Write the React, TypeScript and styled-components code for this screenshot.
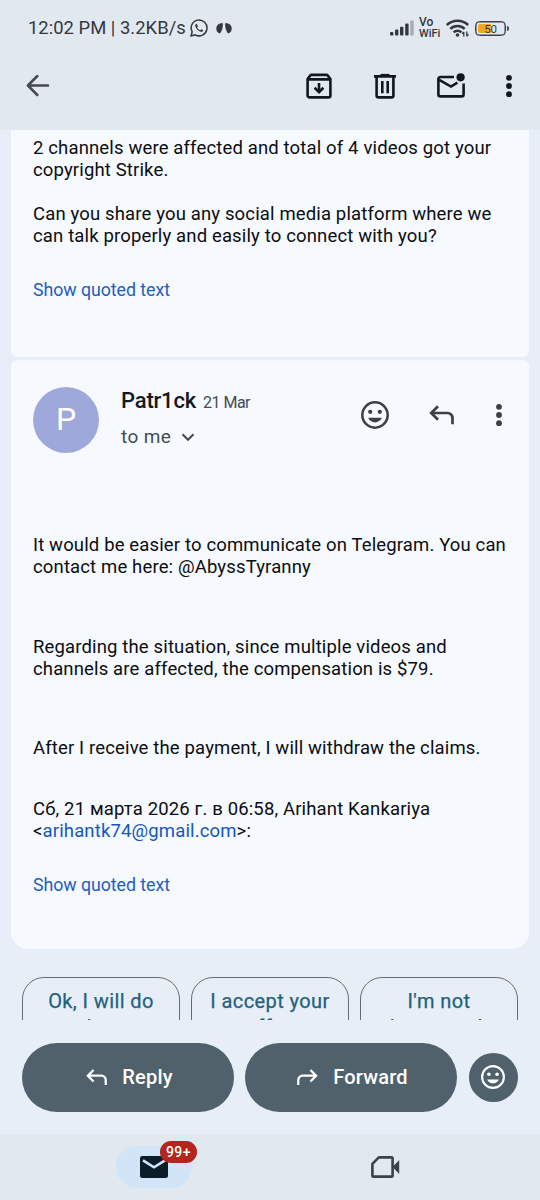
import React from "react";
import styled, { createGlobalStyle } from "styled-components";

const GlobalStyle = createGlobalStyle`
  * { box-sizing: border-box; }
  body { margin: 0; background: #e7eef7; font-family: Roboto, "Noto Sans", sans-serif; }
  button { border: 0; padding: 0; background: none; font: inherit; color: inherit; }
`;

const Screen = styled.div`
  width: 540px;
  height: 1200px;
  display: flex;
  flex-direction: column;
  overflow: hidden;
  background: #e7eef7;
`;

const Header = styled.header`
  flex: none;
  height: 130px;
  background: #e2e8f0;
  color: #111820;
`;

const StatusBar = styled.div`
  height: 56px;
  padding: 0 31px 0 28px;
  display: flex;
  align-items: center;
  color: #33383f;
`;

const Clock = styled.span`
  width: 158px;
  font-size: 18.4px;
  line-height: 22px;
  letter-spacing: 0.03px;
  white-space: nowrap;
`;

const StatusIcons = styled.div<{ $gap: number; $push?: boolean }>`
  display: flex;
  align-items: center;
  gap: ${(p) => p.$gap}px;
  margin-left: ${(p) => (p.$push ? "auto" : "3.5px")};
`;

const VoWifi = styled.div`
  width: 22px;
  font-weight: 500;
  white-space: nowrap;
`;

const VoLine = styled.span<{ $size: number }>`
  display: block;
  line-height: 11px;
  font-size: ${(p) => p.$size}px;
`;

const Toolbar = styled.div`
  height: 60px;
  padding: 0 6px 0 22px;
  display: flex;
  align-items: center;
`;

const IconButton = styled.button<{ $w: number; $push?: boolean }>`
  width: ${(p) => p.$w}px;
  height: 36px;
  flex: none;
  display: flex;
  align-items: center;
  justify-content: center;
  margin-left: ${(p) => (p.$push ? "auto" : "0")};
`;

const Thread = styled.main`
  flex: 1;
  min-height: 0;
  padding: 0 11px;
  display: flex;
  flex-direction: column;
  gap: 3px;
`;

const Card = styled.article<{ $h: number; $radius: string; $top: number }>`
  flex: none;
  height: ${(p) => p.$h}px;
  padding: ${(p) => p.$top}px 22px 0;
  border-radius: ${(p) => p.$radius};
  background: #f6f9fe;
`;

const Paragraph = styled.p<{ $gap?: number }>`
  margin: ${(p) => p.$gap ?? 0}px 0 0;
  font-size: 18.5px;
  line-height: 22px;
  letter-spacing: 0.145px;
  color: #0b0d10;
  white-space: nowrap;
`;

const Line = styled.span`
  display: block;
`;

const Link = styled.a`
  color: #1558bd;
`;

const QuotedLink = styled.a<{ $gap: number }>`
  display: block;
  margin-top: ${(p) => p.$gap}px;
  font-size: 17.8px;
  line-height: 22px;
  letter-spacing: -0.06px;
  color: #1f5fbd;
`;

const MessageHeader = styled.div`
  height: 66px;
  display: flex;
`;

const Avatar = styled.div`
  flex: none;
  width: 66px;
  height: 66px;
  border-radius: 50%;
  background: #9fa8da;
  color: #fff;
  font-size: 32px;
  line-height: 65px;
  text-align: center;
`;

const Sender = styled.div`
  flex: none;
  margin-left: 22px;
  width: 220px;
`;

const NameRow = styled.div`
  display: flex;
  align-items: baseline;
  gap: 7px;
  line-height: 28px;
  white-space: nowrap;
`;

const Name = styled.span`
  font-size: 22px;
  font-weight: 500;
  letter-spacing: -0.2px;
  color: #14181d;
`;

const DateText = styled.span`
  font-size: 16px;
  letter-spacing: -0.5px;
  color: #464b51;
`;

const Recipient = styled.div`
  display: flex;
  align-items: center;
  gap: 10px;
  margin-top: 7px;
  font-size: 19px;
  line-height: 26px;
  letter-spacing: 0.4px;
  color: #464b51;
`;

const Actions = styled.div`
  flex: none;
  display: flex;
  align-items: center;
  height: 55px;
  color: #3c4043;
`;

const Suggestions = styled.div`
  flex: none;
  height: 43px;
  margin: 0 22px;
  display: flex;
  gap: 11px;
  overflow: hidden;
`;

const Chip = styled.button`
  flex: 1;
  height: 80px;
  padding-top: 10px;
  border: 1px solid #656c73;
  border-radius: 22px;
  font-size: 20px;
  line-height: 26px;
  color: #22627f;
  display: flex;
  flex-direction: column;
  align-items: center;
  justify-content: flex-start;
`;

const ChipLine = styled.span`
  white-space: nowrap;
  letter-spacing: 0.4px;
  -webkit-text-stroke: 0.25px currentColor;
`;

const ReplyBar = styled.div`
  flex: none;
  height: 114px;
  padding: 23px 22px 0;
  display: flex;
  align-items: flex-start;
  gap: 11px;
`;

const Pill = styled.button`
  flex: none;
  width: 212px;
  height: 69px;
  border-radius: 35px;
  background: #50616c;
  color: #fff;
  display: flex;
  align-items: center;
  justify-content: center;
  gap: 15px;
  padding: 0 0 1px 3px;
  font-size: 20px;
  font-weight: 500;
  letter-spacing: 0.2px;
`;

const RoundButton = styled.button`
  flex: none;
  width: 49.5px;
  height: 49.5px;
  margin: 9.5px 0 0 auto;
  border-radius: 50%;
  background: #50616c;
  color: #fff;
  display: flex;
  align-items: center;
  justify-content: center;
`;

const BottomNav = styled.nav`
  flex: none;
  height: 66px;
  padding-top: 11.5px;
  background: #e2e8f0;
  display: flex;
`;

const NavItem = styled.div<{ $w: number }>`
  width: ${(p) => p.$w}px;
  height: 42px;
  display: flex;
  align-items: center;
  justify-content: center;
  color: #3b4148;
`;

const ActiveTab = styled.div`
  position: relative;
  width: 76px;
  height: 42px;
  border-radius: 21px;
  background: #d1e5f7;
  display: flex;
  align-items: center;
  justify-content: center;
`;

const Badge = styled.span`
  position: absolute;
  left: 44px;
  top: -4.5px;
  width: 37px;
  height: 22px;
  border-radius: 11px;
  background: #b3261e;
  color: #fff;
  text-align: center;
  font-size: 14px;
  font-weight: 500;
  line-height: 23px;
  letter-spacing: 0.5px;
`;

const Dots = () => (
  <svg width="8" height="24" viewBox="0 0 8 24" fill="currentColor">
    <circle cx="4" cy="3.8" r="2.9" />
    <circle cx="4" cy="12" r="2.9" />
    <circle cx="4" cy="20.2" r="2.9" />
  </svg>
);

const Smile = ({ size }: { size: number }) => (
  <svg width={size} height={size} viewBox="0 0 28 28" fill="currentColor">
    <circle cx="14" cy="14" r="12.7" fill="none" stroke="currentColor" strokeWidth="2.5" />
    <circle cx="9.2" cy="10.8" r="2.1" />
    <circle cx="18.8" cy="10.8" r="2.1" />
    <path d="M7.2 16.8h13.6c-1.1 2.8-3.7 4.6-6.8 4.6s-5.7-1.8-6.8-4.6z" />
  </svg>
);

const ReplyArrow = ({ width, flip }: { width: number; flip?: boolean }) => (
  <svg width={width} height={(width * 20) / 25} viewBox="0 0 25 20" fill="none" stroke="currentColor" strokeWidth="2.7">
    <g transform={flip ? "translate(25 0) scale(-1 1)" : undefined}>
      <path d="M9 1.2 2.2 8 9 14.8M2.2 8h16.3a5 5 0 0 1 5 5v6.2" />
    </g>
  </svg>
);

const WhatsApp = () => (
  <svg width="18" height="18" viewBox="0 0 18 18" fill="none" stroke="currentColor" strokeWidth="1.5">
    <path d="M1 17l1.2-4.2A7.9 7.9 0 1 1 5.2 15.8z" strokeLinejoin="round" />
    <path
      d="M6.6 4.7c-.9.2-1.7 1.2-1.3 2.6.7 2.6 3 4.9 5.5 5.5 1.4.3 2.4-.5 2.5-1.5l-2-1.1-1.1 1.1c-1.4-.5-2.5-1.6-3.1-3.1l.9-1z"
      fill="currentColor"
      stroke="none"
    />
  </svg>
);

const Leaves = () => (
  <svg width="16" height="11" viewBox="0 0 16 11" fill="currentColor">
    <path d="M6.9.3C3.2.1.3 2 .3 5.600c0 2.500 1.200 4.400 3.700 5C5.900 8.300 6.900 4.700 6.900.3z" />
    <path d="M9.100.3c3.700-.2 6.600 1.700 6.600 5.300 0 2.500-1.200 4.400-3.700 5C10.100 8.300 9.100 4.700 9.100.3z" />
  </svg>
);

const Signal = () => (
  <svg width="24" height="16" viewBox="0 0 24 16" fill="currentColor">
    <rect x="0" y="12" width="3.4" height="3.5" rx="1" />
    <rect x="5" y="9.5" width="3.4" height="6" rx="1" />
    <rect x="10" y="6.8" width="3.4" height="8.7" rx="1" />
    <rect x="15.2" y="3.5" width="3.4" height="12" rx="1" />
    <rect x="20.3" y="0.5" width="3.4" height="15" rx="1" fill="#a6abb3" />
  </svg>
);

const Wifi = () => (
  <svg width="24" height="18" viewBox="0 0 24 18" fill="none" stroke="currentColor" strokeWidth="2.5">
    <path d="M.8 6a15.6 15.6 0 0 1 21.4 0M4.3 9.8a10.5 10.5 0 0 1 14.4 0M7.6 13.4a5.7 5.7 0 0 1 7.8 0" />
    <circle cx="11.5" cy="16" r="1.8" fill="currentColor" stroke="none" />
    <path d="M17.8 17.5v-4.5m-1.6 1.8 1.6-1.8M20.8 12.5v4.8m1.7-2-1.7 2" strokeWidth="1.3" />
  </svg>
);

const BatteryShell = styled.div`
  position: relative;
  width: 31px;
  height: 15px;
  margin-right: 3px;
  border: 1px solid #3d424a;
  box-shadow: inset 0 0 0 0.5px #3d424a;
  border-radius: 4.5px;
  padding: 2px;
  &::after {
    content: "";
    position: absolute;
    right: -4px;
    top: 4px;
    width: 2px;
    height: 5px;
    border-radius: 0 2px 2px 0;
    background: #4a4f57;
  }
`;

const BatteryLevel = styled.div`
  width: 13px;
  height: 100%;
  border-radius: 2px 0 0 2px;
  background: #f5a623;
`;

const BatteryText = styled.span`
  position: absolute;
  inset: 0;
  text-align: center;
  font-size: 11.5px;
  line-height: 14px;
  letter-spacing: -0.2px;
`;

const BackIcon = () => (
  <svg width="24" height="22" viewBox="0 0 24 22" fill="none" stroke="#454a51" strokeWidth="2.5" strokeLinecap="round">
    <path d="M22 10.5H2.2M11.3 1 1.9 10.5l9.4 9.5" strokeLinejoin="round" />
  </svg>
);

const ArchiveIcon = () => (
  <svg width="26" height="26" viewBox="0 0 26 26" fill="none" stroke="currentColor" strokeWidth="2.6" strokeLinejoin="round">
    <path d="M1.6 6v16.4a2 2 0 0 0 2 2h18.8a2 2 0 0 0 2-2V6l-2.6-3.4a2 2 0 0 0-1.4-.7H5.6a2 2 0 0 0-1.4.7zM1.6 6.4h22.8" />
    <path d="M13 10v9M8.6 14.8 13 19.1l4.4-4.3" strokeLinejoin="miter" />
  </svg>
);

const TrashIcon = () => (
  <svg width="24" height="26" viewBox="0 0 24 26" fill="none" stroke="currentColor" strokeWidth="2.6">
    <path d="M1 3.4h22M3.6 3.4v19a2 2 0 0 0 2 2h12.8a2 2 0 0 0 2-2v-19M9.3 8v12.2M14.7 8v12.2" />
    <path d="M7.5 2.2h9" />
  </svg>
);

const UnreadIcon = () => (
  <svg width="30" height="27" viewBox="0 0 30 27" fill="none" stroke="currentColor" strokeWidth="2.6">
    <path d="M18 4H4.4a2 2 0 0 0-2 2v15.4a2 2 0 0 0 2 2h21.2a2 2 0 0 0 2-2V10.5" />
    <path d="M3.2 6.8 15 13.6l6.4-3.9" />
    <circle cx="24.6" cy="4.3" r="4.1" fill="currentColor" stroke="none" />
  </svg>
);

const MailIcon = () => (
  <svg width="28" height="22" viewBox="0 0 28 22">
    <rect width="28" height="22" rx="2.2" fill="#0c1d29" />
    <path d="M3 4.3 14 11.3l11-7" fill="none" stroke="#d1e5f7" strokeWidth="2.6" />
  </svg>
);

const MeetIcon = () => (
  <svg width="29" height="22" viewBox="0 0 29 22" fill="none" stroke="currentColor" strokeWidth="2.6" strokeLinejoin="round">
    <path d="M7.8 1.4h12.6a1.2 1.2 0 0 1 1.2 1.2v16.8a1.2 1.2 0 0 1-1.2 1.2H2.6a1.2 1.2 0 0 1-1.2-1.2V7.8z" />
    <path d="M21.6 11 28.2 4v14z" fill="currentColor" stroke="none" />
  </svg>
);

const ChevronDown = () => (
  <svg width="14" height="9" viewBox="0 0 14 9" fill="none" stroke="currentColor" strokeWidth="2">
    <path d="m1.5 1.3 5.5 5.5 5.5-5.5" />
  </svg>
);

const suggestions = [
  ["Ok, I will do", "that."],
  ["I accept your", "offer."],
  ["I'm not", "interested."],
];

export default function App() {
  return (
    <>
      <GlobalStyle />
      <Screen>
        <Header>
          <StatusBar>
            <Clock>12:02 PM | 3.2KB/s</Clock>
            <StatusIcons $gap={8}>
              <WhatsApp />
              <Leaves />
            </StatusIcons>
            <StatusIcons $gap={5} $push>
              <Signal />
              <VoWifi>
                <VoLine $size={12}>Vo</VoLine>
                <VoLine $size={11}>WiFi</VoLine>
              </VoWifi>
              <Wifi />
              <BatteryShell>
                <BatteryLevel />
                <BatteryText>50</BatteryText>
              </BatteryShell>
            </StatusIcons>
          </StatusBar>
          <Toolbar>
            <IconButton $w={32} aria-label="Back"><BackIcon /></IconButton>
            <IconButton $w={66} $push aria-label="Archive"><ArchiveIcon /></IconButton>
            <IconButton $w={66} aria-label="Delete"><TrashIcon /></IconButton>
            <IconButton $w={66} aria-label="Mark unread"><UnreadIcon /></IconButton>
            <IconButton $w={50} aria-label="More"><Dots /></IconButton>
          </Toolbar>
        </Header>

        <Thread>
          <Card $h={227} $top={7} $radius="0 0 6px 6px">
            <Paragraph>
              <Line>2 channels were affected and total of 4 videos got your</Line>
              <Line>copyright Strike.</Line>
            </Paragraph>
            <Paragraph $gap={22}>
              <Line>Can you share you any social media platform where we</Line>
              <Line>can talk properly and easily to connect with you?</Line>
            </Paragraph>
            <QuotedLink $gap={32}>Show quoted text</QuotedLink>
          </Card>

          <Card $h={589} $top={27} $radius="6px 6px 17px 17px">
            <MessageHeader>
              <Avatar>P</Avatar>
              <Sender>
                <NameRow>
                  <Name>Patr1ck</Name>
                  <DateText>21 Mar</DateText>
                </NameRow>
                <Recipient>to me <ChevronDown /></Recipient>
              </Sender>
              <Actions>
                <IconButton $w={67} aria-label="React"><Smile size={28} /></IconButton>
                <IconButton $w={66} aria-label="Reply"><ReplyArrow width={25} /></IconButton>
                <IconButton $w={50} aria-label="More"><Dots /></IconButton>
              </Actions>
            </MessageHeader>
            <Paragraph $gap={81}>
              <Line>It would be easier to communicate on Telegram. You can</Line>
              <Line>contact me here: @AbyssTyranny</Line>
            </Paragraph>
            <Paragraph $gap={57.5}>
              <Line>Regarding the situation, since multiple videos and</Line>
              <Line>channels are affected, the compensation is $79.</Line>
            </Paragraph>
            <Paragraph $gap={57}>After I receive the payment, I will withdraw the claims.</Paragraph>
            <Paragraph $gap={39.5}>
              <Line>Сб, 21 марта 2026 г. в 06:58, Arihant Kankariya</Line>
              <Line>&lt;<Link>arihantk74@gmail.com</Link>&gt;:</Line>
            </Paragraph>
            <QuotedLink $gap={32}>Show quoted text</QuotedLink>
          </Card>
        </Thread>

        <Suggestions>
          {suggestions.map((lines) => (
            <Chip key={lines[0]}>
              {lines.map((l) => (
                <ChipLine key={l}>{l}</ChipLine>
              ))}
            </Chip>
          ))}
        </Suggestions>

        <ReplyBar>
          <Pill><ReplyArrow width={21} />Reply</Pill>
          <Pill><ReplyArrow width={21} flip />Forward</Pill>
          <RoundButton aria-label="React"><Smile size={24} /></RoundButton>
        </ReplyBar>

        <BottomNav>
          <NavItem $w={308}>
            <ActiveTab>
              <MailIcon />
              <Badge>99+</Badge>
            </ActiveTab>
          </NavItem>
          <NavItem $w={155}><MeetIcon /></NavItem>
        </BottomNav>
      </Screen>
    </>
  );
}
